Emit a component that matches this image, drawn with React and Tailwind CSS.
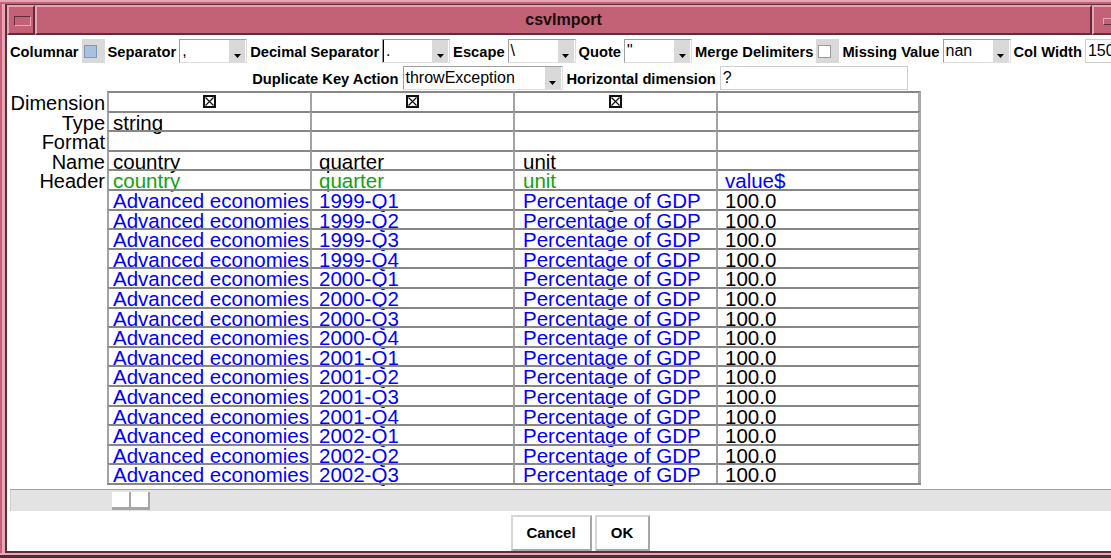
const SANS = "font-['Liberation_Sans',Arial,sans-serif]";

const Arrow = () => (
    <svg width="7" height="4" viewBox="0 0 7 4">
        <polygon points="0,0 7,0 3.5,4" fill="#000" />
    </svg>
);

const Combo = ({ value, width = 'w-[68px]', focus = false }) => (
    <div
        className={`${width} h-[24px] shrink-0 flex bg-white border border-t-[#9f9f9f] border-l-[#9f9f9f] border-b-[#dedede] border-r-[#dedede]`}
    >
        <div className={`flex-1 flex items-center pl-[2px] text-[16px] text-black ${focus ? 'border-l border-l-black' : ''}`}>
            {value}
        </div>
        <div className="w-[16px] bg-[#d9d9d9] flex items-end justify-center pb-[4px] mr-[1px]">
            <Arrow />
        </div>
    </div>
);

const Check = ({ on = false }) => (
    <div className="w-[23px] h-[24px] shrink-0 bg-[#d9d9d9] flex items-center pl-[2px]">
        <div
            className={`w-[13px] h-[13px] border ${on ? 'bg-[#a6c2de] border-[#7f98b4]' : 'bg-white border-[#9a9a9a]'}`}
        />
    </div>
);

const Input = ({ value, width }) => (
    <div
        className={`${width} h-[24px] shrink-0 flex items-center pl-[2px] text-[16px] text-black bg-white border border-[#cfcfcf]`}
    >
        {value}
    </div>
);

const Label = ({ children }) => (
    <span className="text-[14.7px] leading-[18px] pt-[2px] font-bold text-black shrink-0">{children}</span>
);

const XBox = () => (
    <svg width="13" height="13" viewBox="0 0 13 13">
        <rect x="1" y="1" width="11" height="11" fill="white" stroke="#111" strokeWidth="2" />
        <path d="M2.5 2.5 L10.5 10.5 M10.5 2.5 L2.5 10.5" stroke="#111" strokeWidth="1.2" />
    </svg>
);

const BLACK = 'text-black';
const GREEN = 'text-[#12a012]';
const BLUE = 'text-[#0000ff]';

const pads = ['pl-[4px]', 'pl-[7px]', 'pl-[8px]', 'pl-[7px]'];
const widths = ['w-[203px]', 'w-[203px]', 'w-[203px]', 'w-[205px] border-r-[3px] border-r-[#a9a9a9]'];

const headRows = [
    { label: 'Dimension', check: true },
    { label: 'Type', cells: [['string', BLACK], ['', BLACK], ['', BLACK], ['', BLACK]] },
    { label: 'Format', cells: [['', BLACK], ['', BLACK], ['', BLACK], ['', BLACK]] },
    { label: 'Name', cells: [['country', BLACK], ['quarter', BLACK], ['unit', BLACK], ['', BLACK]] },
    { label: 'Header', cells: [['country', GREEN], ['quarter', GREEN], ['unit', GREEN], ['value$', BLUE]] },
];

const quarters = [
    '1999-Q1', '1999-Q2', '1999-Q3', '1999-Q4',
    '2000-Q1', '2000-Q2', '2000-Q3', '2000-Q4',
    '2001-Q1', '2001-Q2', '2001-Q3', '2001-Q4',
    '2002-Q1', '2002-Q2', '2002-Q3',
];

const dataRows = quarters.map((q) => ({
    label: '',
    cells: [['Advanced economies', BLUE], [q, BLUE], ['Percentage of GDP', BLUE], ['100.0', BLACK]],
}));

const Row = ({ row }) => (
    <div className="relative flex h-[19.6px]">
        <div className="w-[100px] shrink-0 text-right pr-[2px] pt-[2px] text-[20px] leading-[20px] text-black">
            {row.label}
        </div>
        {[0, 1, 2, 3].map((i) => (
            <div
                key={i}
                className={`${widths[i]} shrink-0 border-t-2 border-t-[#878787] border-l-2 border-l-[#a3a3a3] ${
                    row.check ? 'flex items-center justify-center' : pads[i]
                }`}
            >
                {row.check ? (
                    i < 3 && <XBox />
                ) : (
                    <span className={`block whitespace-nowrap text-[20.5px] leading-[19px] ${row.cells[i][1]}`}>
                        {row.cells[i][0]}
                    </span>
                )}
            </div>
        ))}
    </div>
);

const TitleBox = ({ className = '', children }) => (
    <div
        className={`h-full border-2 border-t-[#eaa5b5] border-l-[#eaa5b5] border-b-[#5e2d3a] border-r-[#5e2d3a] ${className}`}
    >
        {children}
    </div>
);

const Button = ({ children, width }) => (
    <div
        className={`${width} h-[36px] flex items-center justify-center bg-white text-[15px] font-bold text-black border-2 border-t-[#d6d6d6] border-l-[#d6d6d6] border-b-[#a6a6a6] border-r-[#a6a6a6]`}
    >
        {children}
    </div>
);

export default function App() {
    return (
        <div className={`w-[1111px] h-[558px] overflow-hidden ${SANS}`}>
            <div className="w-[1153px] h-[558px] bg-[#c36176] border-t-2 border-t-[#eaa5b5] flex flex-col">
                <div className="flex-1 flex pl-[2px] pt-[2px] min-h-0">
                    <div className="flex-1 flex flex-col border-l-[3px] border-l-[#eaa5b5]">
                        <div className="flex-1 flex flex-col border-l-2 border-t border-b-2 border-[#5e2d3a]">
                            {/* title bar */}
                            <div className="h-[30px] flex shrink-0">
                                <TitleBox className="w-[28px] pl-[5px] pt-[9px]">
                                    <div className="w-[17px] h-[10px] border border-t-[#5e2d3a] border-l-[#5e2d3a] border-b-[#eaa5b5] border-r-[#eaa5b5]" />
                                </TitleBox>
                                <TitleBox className="flex-1 flex items-center justify-center">
                                    <span className="text-[16px] font-bold text-[#1a0d10]">csvImport</span>
                                </TitleBox>
                                <TitleBox className="w-[28px] pl-[9px] pt-[11px]">
                                    <div className="w-[10px] h-[7px] border border-t-[#eaa5b5] border-l-[#eaa5b5] border-b-[#5e2d3a] border-r-[#5e2d3a]" />
                                </TitleBox>
                                <TitleBox className="w-[33px]" />
                            </div>

                            {/* content */}
                            <div className="flex-1 bg-white flex flex-col pt-[4px]">
                                <div className="h-[24px] flex items-center gap-[3px] pl-[3px] whitespace-nowrap">
                                    <Label>Columnar</Label>
                                    <Check on />
                                    <Label>Separator</Label>
                                    <Combo value="," />
                                    <Label>Decimal Separator</Label>
                                    <Combo value="." focus />
                                    <Label>Escape</Label>
                                    <Combo value="\" />
                                    <Label>Quote</Label>
                                    <Combo value={'"'} />
                                    <Label>Merge Delimiters</Label>
                                    <Check />
                                    <Label>Missing Value</Label>
                                    <Combo value="nan" />
                                    <Label>Col Width</Label>
                                    <Input value="150" width="w-[60px]" />
                                </div>

                                <div className="h-[24px] mt-[3px] flex items-center justify-center gap-[4px] whitespace-nowrap">
                                    <Label>Duplicate Key Action</Label>
                                    <Combo value="throwException" width="w-[160px]" />
                                    <Label>Horizontal dimension</Label>
                                    <Input value="?" width="w-[188px]" />
                                </div>

                                {/* table */}
                                <div className="mt-[1px] flex flex-col">
                                    {headRows.map((r, i) => (
                                        <Row key={`h${i}`} row={r} />
                                    ))}
                                    {dataRows.map((r, i) => (
                                        <Row key={`d${i}`} row={r} />
                                    ))}
                                    <div className="relative flex h-[2px]">
                                        <div className="w-[100px] shrink-0" />
                                        <div className="w-[814px] bg-[#878787]" />
                                    </div>
                                </div>

                                {/* scrollbar */}
                                <div className="ml-[3px] mt-[4px] h-[22px] shrink-0 bg-[#e3e3e3] border-t border-t-[#a0a0a0] border-l border-l-[#cccccc] pt-[2px] pl-[101px] flex">
                                    <div className="flex h-[18px]">
                                        <div className="w-[19px] bg-white border-r-2 border-b-[3px] border-[#a6a6a6]" />
                                        <div className="w-[19px] bg-white border-r-2 border-b-[3px] border-[#a6a6a6]" />
                                    </div>
                                </div>

                                {/* buttons */}
                                <div className="flex justify-center gap-[3px] pt-[4px]">
                                    <Button width="w-[81px]">Cancel</Button>
                                    <Button width="w-[55px]">OK</Button>
                                </div>
                            </div>
                        </div>
                    </div>
                </div>
                <div className="h-[2px] bg-[#eaa5b5] shrink-0" />
                <div className="h-[3px] bg-[#4f2b35] shrink-0" />
            </div>
        </div>
    );
}
